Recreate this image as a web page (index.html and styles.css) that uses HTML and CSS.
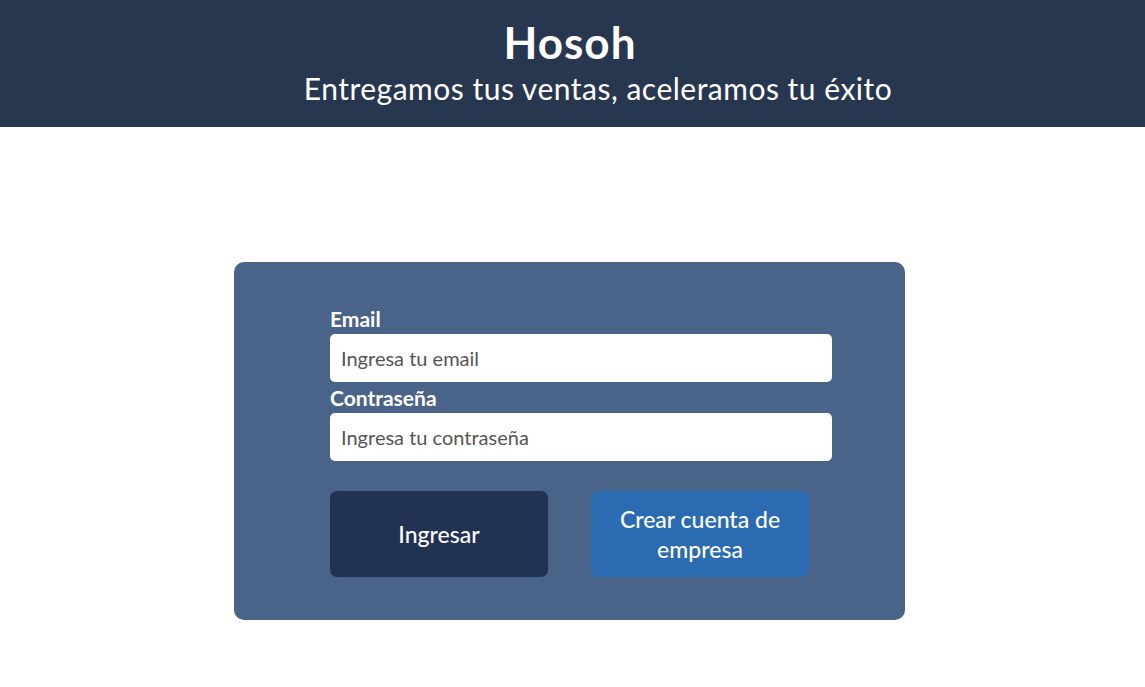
FILE: index.html
```html
<!DOCTYPE html>
<html lang="es">
<head>
<meta charset="utf-8">
<title>Hosoh</title>
<link rel="stylesheet" href="styles.css">
</head>
<body>
<header class="header">
  <h1 class="brand">Hosoh</h1>
  <p class="tagline">Entregamos tus ventas, aceleramos tu éxito</p>
</header>
<main class="main">
  <form class="card">
    <div class="fields">
      <label class="label" for="email">Email</label>
      <input class="input" id="email" type="email" placeholder="Ingresa tu email">
      <label class="label" for="pass">Contraseña</label>
      <input class="input" id="pass" type="password" placeholder="Ingresa tu contraseña">
    </div>
    <div class="actions">
      <button type="button" class="btn btn-primary">Ingresar</button>
      <button type="button" class="btn btn-secondary">Crear cuenta de empresa</button>
    </div>
  </form>
</main>
</body>
</html>
```
FILE: styles.css
```css
* { box-sizing: border-box; }
html, body { margin: 0; padding: 0; }
body {
  font-family: "Lato", "Open Sans", sans-serif;
  background: #ffffff;
  color: #ffffff;
}
.header {
  background: #283750;
  height: 127px;
  display: flex;
  flex-direction: column;
  align-items: center;
  padding-top: 16px;
}
.brand {
  margin: 0;
  font-size: 44px;
  font-weight: 700;
  letter-spacing: 1px;
  line-height: 52px;
  padding-right: 5px;
}
.tagline {
  margin: 0;
  font-size: 30px;
  font-weight: 400;
  letter-spacing: 0.5px;
  line-height: 40px;
  padding-left: 51px;
}
.main {
  display: flex;
  justify-content: center;
  padding-top: 135px;
  padding-right: 6px;
}
.card {
  width: 671px;
  height: 358px;
  background: #4a6389;
  border-radius: 10px;
  padding: 46px 73px 0 96px;
  display: flex;
  flex-direction: column;
}
.fields {
  display: flex;
  flex-direction: column;
}
.label {
  font-size: 21px;
  font-weight: 700;
  line-height: 26px;
  color: #ffffff;
  margin-top: -2px;
  margin-bottom: 2px;
}
.input {
  width: 502px;
  height: 48px;
  border: none;
  border-radius: 5px;
  background: #ffffff;
  padding: 0 11px;
  font-family: inherit;
  font-size: 20px;
  color: #333;
  margin-bottom: 5px;
}
.input::placeholder { color: #555; }
.actions {
  display: flex;
  gap: 43px;
  margin-top: 25px;
}
.btn {
  width: 218px;
  height: 86px;
  border: none;
  border-radius: 7px;
  color: #ffffff;
  font-family: inherit;
  font-size: 23px;
  line-height: 30px;
  font-weight: 500;
  padding: 0 16px;
}
.btn-primary { background: #213252; }
.btn-secondary { background: #2a6bb2; }
```
